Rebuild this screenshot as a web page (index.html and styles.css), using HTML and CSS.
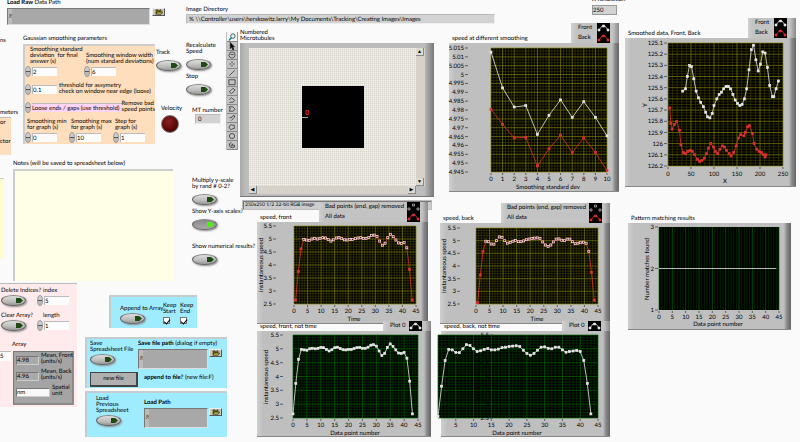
FILE: index.html
```html
<!DOCTYPE html>
<html lang="en">
<head>
<meta charset="UTF-8">
<meta name="viewport" content="width=device-width, initial-scale=1.0">
<title>Speed Tracking</title>
<link rel="stylesheet" href="styles.css">
</head>
<body>
<svg width="0" height="0" class="defs">
    <symbol id="folder" viewBox="0 0 13 8">
        <path d="M3 1h3l1 1h3v4H3z" fill="#6a6000" stroke="#222" stroke-width=".5"/>
        <path d="M3 7l2-3h7l-2 3z" fill="#c8bc30" stroke="#222" stroke-width=".9"/>
        <path d="M8 1q2-1 3 1" fill="none" stroke="#222" stroke-width=".7"/>
    </symbol>
</svg>

<header class="top">
    <div class="load-raw">
        <label for="rawPath"><b>Load Raw</b> Data Path</label>
        <div class="path-row">
            <span class="path"><i>&#8528;</i><input type="text" id="rawPath"></span>
            <button class="browse" aria-label="Browse"><svg><use href="#folder"/></svg></button>
        </div>
    </div>
    <div class="image-dir">
        <label for="imgDir">Image Directory</label>
        <input type="text" id="imgDir" class="readout" value="% \\Controller\users\herskowitz.larry\My Documents\Tracking\Creating Images\Images" readonly>
    </div>
    <div class="resolution">
        <label for="xres">X Resolution</label>
        <input type="text" id="xres" class="readout boxed" value="250" readonly>
    </div>
</header>

<main>
<section class="left">
    <div class="upper">
        <div class="edge">
            <span class="edge-a">ns</span>
            <span class="edge-b">meters</span>
            <div class="edge-orange"><span>or</span><span>ctor</span></div>
            <div class="edge-yellow"></div>
        </div>
        <div class="rows">
            <div class="row-a">
                <div class="gauss">
                    <h2>Gaussian smoothing parameters</h2>
                    <div class="gauss-box">
                        <div class="line">
                            <div class="field wide">
                                <label for="sd">Smoothing standard<br>deviation&nbsp; for final<br>answer (s)</label>
                                <span class="num"><i></i><input type="text" id="sd" value="2"></span>
                            </div>
                            <div class="field">
                                <label for="win">Smoothing window width<br>(num standard deviations)</label>
                                <span class="num"><i></i><input type="text" id="win" value="6"></span>
                            </div>
                        </div>
                        <div class="line">
                            <span class="num"><i></i><input type="text" id="thr" value="0.1"></span>
                            <label for="thr" class="side">threshold for assymetry<br>check on window near edge (loose)</label>
                        </div>
                        <div class="line">
                            <span class="num ring"><i></i><input type="text" id="bad" value="Loose ends / gaps (use threshold)"></span>
                            <label for="bad">Remove bad<br>speed points</label>
                        </div>
                        <div class="line spread">
                            <div class="field">
                                <label for="smin">Smoothing min<br>for graph (s)</label>
                                <span class="num"><i></i><input type="text" id="smin" value="0"></span>
                            </div>
                            <div class="field">
                                <label for="smax">Smoothing max<br>for graph (s)</label>
                                <span class="num"><i></i><input type="text" id="smax" value="10"></span>
                            </div>
                            <div class="field">
                                <label for="step">Step for<br>graph (s)</label>
                                <span class="num"><i></i><input type="text" id="step" value="1"></span>
                            </div>
                        </div>
                    </div>
                </div>
                <div class="track">
                    <label for="track">Track</label>
                    <button class="bool" id="track"><i></i></button>
                    <span class="velocity">Velocity</span>
                    <span class="led"></span>
                </div>
                <div class="recalc">
                    <label for="recalc">Recalculate<br>Speed</label>
                    <button class="bool" id="recalc"><i></i></button>
                    <label for="stop">Stop</label>
                    <button class="bool" id="stop"><i></i></button>
                    <div class="mt">
                        <label for="mt">MT number</label>
                        <input type="text" id="mt" class="readout" value="0" readonly>
                    </div>
                </div>
                <div class="tools">
                    <button aria-label="Zoom" class="on"><svg viewBox="0 0 11 9"><circle cx="6.500" cy="3.500" r="2.500" fill="#d8ffff" stroke="#222" stroke-width=".8"/><path d="M5 5L2 8.500" stroke="#088" stroke-width="1.500"/></svg></button>
                    <button aria-label="Select"><svg viewBox="0 0 11 9"><path d="M3.500 0.500v7l1.500-1.500 1.500 3 1.200-.6L6.300 5.500h2z" fill="#000"/></svg></button>
                    <button aria-label="Pan"><svg viewBox="0 0 11 9"><path d="M3 3q0-2 1.500-1.500Q5.500 0 6.500 1.500 8.500 1 8.500 3l.5 2q-1 3-3.500 3T2 5zM4 4h3.500"/></svg></button>
                    <button aria-label="Point"><svg viewBox="0 0 11 9"><path d="M5.500 1.500v2M5.500 5.500v2M2.500 4.500h2M6.500 4.500h2"/></svg></button>
                    <button aria-label="Line"><svg viewBox="0 0 11 9"><path d="M2.500 7.500l6-6"/></svg></button>
                    <button aria-label="Rectangle"><svg viewBox="0 0 11 9"><path d="M2 2h7v5.500H2z"/></svg></button>
                    <button aria-label="Rotated rectangle"><svg viewBox="0 0 11 9"><path d="M2.500 5.500l4-4 2.500 2-4 4z"/></svg></button>
                    <button aria-label="Broken line"><svg viewBox="0 0 11 9"><path d="M2.500 4L5 2l3.500 3-2 2H2.500"/></svg></button>
                    <button aria-label="Polygon"><svg viewBox="0 0 11 9"><path d="M2.500 2h4l2.500 3-2.500 2h-4l1-2.500z"/></svg></button>
                    <button aria-label="Freehand line"><svg viewBox="0 0 11 9"><path d="M2.500 4.500Q4 3.500 4.500 4.500q2-4 4-2.500 0 2-1.500 3T4.500 7.500"/></svg></button>
                    <button aria-label="Freehand region"><svg viewBox="0 0 11 9"><path d="M3 3q1.500-2 3-.5 3-1 2 1.500 1 3-1.500 2.500-3 2-3.500-.5Q1.500 5 3 3z"/></svg></button>
                    <button aria-label="Oval"><svg viewBox="0 0 11 9"><ellipse cx="5.500" cy="4.500" rx="3" ry="2.800"/></svg></button>
                    <button aria-label="Annulus"><svg viewBox="0 0 11 9"><path d="M5 1.500Q2 2.500 2.500 5T6 7.500 8.500 5L6 4.500V3M4.500 4v1.500h2"/></svg></button>
                </div>
            </div>
            <div class="row-b">
                <div class="notes">
                    <label for="notes">Notes (will be saved to spreadsheet below)</label>
                    <textarea id="notes"></textarea>
                </div>
                <div class="switches">
                    <label for="mult">Multiply y-scale<br>by rand # 0-2?</label>
                    <button class="bool" id="mult"><i></i></button>
                    <label for="yaxis">Show Y-axis scales?</label>
                    <button class="bool lit" id="yaxis"><i></i></button>
                    <label for="numres" class="apart">Show numerical results?</label>
                    <button class="bool" id="numres"><i></i></button>
                </div>
            </div>
        </div>
    </div>

    <div class="lower">
        <div class="indices">
            <div class="index-grid">
                <div>
                    <label for="del">Delete Indices?</label>
                    <button class="bool" id="del"><i></i></button>
                </div>
                <div class="field">
                    <label for="idx">index</label>
                    <span class="num"><i></i><input type="text" id="idx" value="5"></span>
                </div>
                <div>
                    <label for="clr">Clear Array?</label>
                    <button class="bool" id="clr"><i></i></button>
                </div>
                <div class="field">
                    <label for="len">length</label>
                    <span class="num"><i></i><input type="text" id="len" value="1"></span>
                </div>
            </div>
            <h2>Array</h2>
            <div class="array-row">
                <input type="text" class="array-index" aria-label="Array index" value="5">
                <div class="array">
                    <div><input type="text" id="mf" value="4.98" readonly><label for="mf">Mean, Front<br>(units/s)</label></div>
                    <div><input type="text" id="mb" value="4.96" readonly><label for="mb">Mean, Back<br>(units/s)</label></div>
                    <div><input type="text" id="unit" class="unit" value="nm"><label for="unit">Spatial<br>unit</label></div>
                </div>
            </div>
        </div>
        <div class="files">
            <div class="blue append">
                <div class="append-btn">
                    <label for="app">Append to Array</label>
                    <button class="bool" id="app"><i></i></button>
                </div>
                <label class="check">Keep<br>Start<input type="checkbox" checked></label>
                <label class="check">Keep<br>End<input type="checkbox" checked></label>
            </div>
            <div class="blue save">
                <div class="save-left">
                    <label for="save">Save<br>Spreadsheet File</label>
                    <button class="bool" id="save"><i></i></button>
                    <button class="newfile">new file</button>
                </div>
                <div class="save-right">
                    <label for="savePath"><b>Save file path</b> (dialog if empty)</label>
                    <div class="path-row">
                        <span class="path"><i>&#8528;</i><input type="text" id="savePath"></span>
                        <button class="browse" aria-label="Browse"><svg><use href="#folder"/></svg></button>
                    </div>
                    <p><b>append to file?</b> (new file:F)</p>
                </div>
            </div>
            <div class="blue load">
                <div class="load-left">
                    <label for="prev">Load<br>Previous<br>Spreadsheet</label>
                    <button class="bool" id="prev"><i></i></button>
                </div>
                <div class="load-right">
                    <label for="loadPath"><b>Load Path</b></label>
                    <div class="path-row">
                        <span class="path"><i>&#8528;</i><input type="text" id="loadPath"></span>
                        <button class="browse" aria-label="Browse"><svg><use href="#folder"/></svg></button>
                    </div>
                </div>
            </div>
        </div>
    </div>
    <p class="cut">adsheet string</p>
</section>

<section class="graphs">
    <div class="col col-a">
        <h2>Numbered<br>Microtubules</h2>
        <div class="viewer">
            <div class="canvas">
                <svg class="frame" viewBox="0 0 62 62">
                    <rect width="62" height="62"/>
                    <text x="3" y="29" class="mark">0</text>
                    <path d="M0 31.500h6" stroke="#aaa"/>
                </svg>
            </div>
            <div class="vbar"><button>&#9650;</button><button>&#9660;</button></div>
            <div class="hbar"><button>&#9664;</button><button>&#9654;</button></div>
        </div>
        <div class="status"><span>250x250 1/2 32-bit RGB image</span></div>
        <figure class="chart front" data-chart="front"></figure>
        <figure class="chart front-pts" data-chart="frontPts"></figure>
    </div>
    <div class="col col-b">
        <figure class="chart smooth" data-chart="smooth"></figure>
        <figure class="chart back" data-chart="back"></figure>
        <figure class="chart back-pts" data-chart="backPts"></figure>
    </div>
    <div class="col col-c">
        <figure class="chart xy" data-chart="xy"></figure>
        <figure class="chart pattern" data-chart="pattern"></figure>
    </div>
</section>
</main>
<script src="charts.js"></script>
</body>
</html>
```

FILE: styles.css
```css
* {
    box-sizing: border-box;
}
body {
    margin: 0;
    height: 100vh;
    overflow: hidden;
    background: #fafafa;
    font: 6px/6px Lato, "Liberation Sans", sans-serif;
    text-rendering: geometricPrecision;
    color: #000;
}
h2, p, figure {
    margin: 0;
    font-size: 6px;
    font-weight: normal;
}
label, figcaption, h2, p, .velocity {
    display: block;
    white-space: nowrap;
}
input, textarea, button {
    font: inherit;
    color: inherit;
    text-rendering: inherit;
    margin: 0;
    padding: 0;
    border: 0;
    border-radius: 0;
    min-width: 0;
}
.defs {
    position: absolute;
}

/* header */
.top {
    display: grid;
    grid-template-columns: 186px 406fr 208fr;
}
.load-raw {
    padding: 0 0 2px 7px;
}
.load-raw label {
    height: 8px;
}
.load-raw .path {
    width: 143px;
    height: 17px;
}
.path-row {
    display: flex;
    align-items: flex-start;
    gap: 2px;
}
.path {
    display: flex;
    align-items: center;
    background: #aaa;
    border: 1px solid #777;
    border-right-color: #ddd;
    border-bottom-color: #ddd;
}
.path i {
    width: 4px;
    height: 100%;
    display: flex;
    align-items: center;
    background: #bbb;
    overflow: hidden;
}
.path input {
    flex: 1;
    height: 100%;
    background: #a8a8a8;
}
.browse {
    width: 13px;
    height: 8px;
    background: #c8c8b8;
    border: 1px solid #eee;
    border-right-color: #555;
    border-bottom-color: #555;
}
.browse svg {
    display: block;
    width: 11px;
    height: 6px;
}
.image-dir {
    padding-top: 7px;
}
.image-dir label {
    height: 7px;
}
.readout {
    display: block;
    background: #d2d2d2;
    border: 1px solid #bbb;
    border-right-color: #eee;
    border-bottom-color: #eee;
    height: 10px;
    padding-left: 2px;
}
.image-dir .readout {
    width: 76%;
}
.resolution {
    margin-top: -3px;
}
.resolution label {
    height: 8px;
}
.boxed {
    width: 25px;
    border-color: #999;
    padding-left: 0;
}

main {
    display: flex;
}
.left {
    width: 240px;
    flex: none;
}
.graphs {
    flex: 1;
    display: grid;
    grid-template-columns: 198fr 186fr 176fr;
}

/* controls */
.bool {
    display: block;
    width: 25px;
    height: 11px;
    border: 1px solid #666;
    border-top-color: #888;
    border-radius: 50%;
    background: linear-gradient(#ddd, #bcbcbc 60%, #999);
    box-shadow: 1px 1px 2px #888;
}
.bool i {
    display: block;
    width: 7px;
    height: 5px;
    margin-left: 14px;
    background: #1d4a10;
    clip-path: polygon(0 0, 60% 0, 100% 50%, 60% 100%, 0 100%);
}
.bool.lit {
    background: linear-gradient(#888, #aaa);
}
.bool.lit i {
    background: #4cf010;
}
.num {
    display: flex;
    align-items: center;
    width: 32px;
    height: 11px;
    gap: 1px;
}
.num i {
    flex: none;
    width: 6px;
    height: 11px;
    border-radius: 50%;
    border: 1px solid #999;
    background: linear-gradient(#ccc 45%, #555 45%, #555 55%, #bbb 55%);
}
.num input {
    flex: 1;
    width: 0;
    height: 9px;
    background: #fcfcfc;
    border-top: 1px solid #bbb;
    border-left: 1px solid #bbb;
}
.num.ring {
    width: 97px;
}
.ring input {
    background: #ffd5f5;
    border-left: 0;
}

/* left side */
.upper {
    display: flex;
}
.edge {
    width: 13px;
    display: flex;
    flex-direction: column;
    align-items: flex-start;
    white-space: nowrap;
}
.edge-a {
    margin-top: 11px;
}
.edge-b {
    margin-top: 66px;
}
.edge-orange {
    width: 11px;
    height: 38px;
    margin-top: 1px;
    padding-top: 2px;
    border-top: 1px solid #bbb;
    background: #ffdebd;
    display: flex;
    flex-direction: column;
    gap: 13px;
}
.edge-yellow {
    width: 4px;
    height: 81px;
    margin-top: 23px;
    border-top: 1px solid #ccc;
    background: #fffdd0;
}
.row-a {
    display: flex;
    height: 123px;
}
.gauss {
    width: 132px;
    margin: 9px 0 0 10px;
}
.gauss h2 {
    height: 8px;
}
.gauss-box {
    display: flex;
    flex-direction: column;
    gap: 6px;
    height: 100px;
    padding-top: 1px;
    border-top: 2px solid #ccc;
    border-left: 2px solid #ccc;
    background: #ffdebd;
}
.line {
    display: flex;
    align-items: flex-end;
}
.line.spread {
    gap: 12px;
}
.field {
    width: 32px;
}
.field.wide {
    width: 59px;
}
.field label {
    margin: 0 0 1px 2px;
}
.line .side {
    margin-left: 2px;
}
.wide label {
    margin-left: 5px;
}
.track {
    width: 30px;
    padding-top: 23px;
    margin-left: 1px;
}
.track .bool,
.recalc .bool {
    margin-top: 4px;
}
.velocity {
    margin: 35px 0 3px 5px;
}
.led {
    display: block;
    width: 18px;
    height: 18px;
    margin-left: 5px;
    border-radius: 50%;
    border: 1px solid #777;
    background: radial-gradient(circle at 40% 35%, #8a2020, #5a0808 60%, #300);
}
.recalc {
    width: 40px;
    padding-top: 16px;
}
.recalc .bool + label {
    margin-top: 4px;
}
.mt {
    margin: 13px 0 0 6px;
}
.mt .readout {
    width: 26px;
    margin-left: 3px;
}
.tools {
    display: flex;
    flex-direction: column;
    width: 12px;
    margin-top: 5px;
    border-left: 1px solid #bbb;
}
.tools button {
    height: 9px;
    width: 11px;
    background: #c4c4c4;
    border-bottom: 1px solid #888;
    border-right: 1px solid #999;
}
.tools .on {
    height: 10px;
    background: #f4f4f4;
}
.tools svg {
    display: block;
    width: 10px;
    height: 8px;
    fill: none;
    stroke: #222;
    stroke-width: .8;
}
.row-b {
    display: flex;
}
.notes {
    width: 160px;
    margin-top: 11px;
}
.notes label {
    height: 8px;
}
.notes textarea {
    display: block;
    width: 100%;
    height: 112px;
    resize: none;
    background: #fffee6;
    border-top: 2px solid #ccc;
    border-left: 2px solid #ccc;
}
.switches {
    padding: 28px 0 0 19px;
}
.switches .bool {
    margin: 4px 0;
}
.switches .apart {
    margin-top: 14px;
}
.lower {
    display: flex;
    gap: 8px;
    margin-top: 2px;
}
.indices {
    width: 77px;
    height: 124px;
    background: #ffebeb;
    border-top: 1px solid #bbb;
}
.index-grid {
    display: grid;
    grid-template-columns: 36px 32px;
    row-gap: 7px;
    padding: 4px 0 0 1px;
}
.index-grid .bool {
    margin-top: 1px;
}
.index-grid .field label {
    margin-left: 6px;
}
.indices h2 {
    margin: 11px 0 3px 12px;
}
.array-row {
    display: flex;
    align-items: flex-start;
    gap: 2px;
}
.array-index {
    width: 11px;
    height: 10px;
    background: #fcfcfc;
    border-top: 1px solid #bbb;
}
.array {
    width: 61px;
    height: 54px;
    padding: 1px 0 0 2px;
    display: grid;
    gap: 4px;
    align-content: start;
    background: #a4a4a4;
    border: 1px solid #777;
    border-right: 2px solid #8a8a8a;
    border-bottom: 2px solid #8a8a8a;
}
.array div {
    display: flex;
    align-items: flex-end;
    gap: 2px;
}
.array input {
    width: 23px;
    height: 9px;
    background: #aaa;
    border: 1px solid #777;
    border-right-color: #ccc;
    border-bottom-color: #ccc;
}
.array .unit {
    width: 34px;
    background: #f8f8f8;
}
.files {
    padding-top: 12px;
}
.blue {
    display: flex;
    width: 142px;
    background: #a0ecff;
    border-top: 2px solid #c4cccf;
    border-left: 2px solid #c4cccf;
}
.append {
    width: 88px;
    height: 33px;
    margin-left: 24px;
    padding: 6px 0 0 9px;
}
.append-btn {
    width: 43px;
    padding-top: 3px;
}
.append-btn .bool,
.save .bool,
.load .bool {
    margin-top: 1px;
}
.check {
    width: 18px;
}
.check input {
    display: block;
    appearance: none;
    width: 7px;
    height: 7px;
    margin-top: 2px;
    background: #fff;
    border: 1px solid #777;
}
.check input:checked::after {
    content: "";
    display: block;
    width: 3px;
    height: 5px;
    margin-left: 1px;
    border: solid #000;
    border-width: 0 1px 1px 0;
    transform: rotate(40deg);
}
.save {
    height: 51px;
    margin-top: 9px;
    padding: 2px 0 0 3px;
}
.save-left {
    width: 48px;
}
.newfile {
    width: 48px;
    height: 15px;
    margin-top: 7px;
    background: #b0b0b0;
    border: 1px solid #444;
    border-right-width: 2px;
    border-bottom-width: 2px;
}
.save .path,
.load .path {
    width: 70px;
    height: 20px;
}
.save .path-row,
.load .path-row {
    gap: 1px;
    margin-top: 2px;
}
.save p {
    margin: 6px 0 0 6px;
}
.load {
    height: 46px;
    margin-top: 3px;
    padding: 3px 0 0 9px;
}
.load-left {
    width: 48px;
}
.load-right {
    padding-top: 4px;
}
.load .path {
    width: 64px;
}
.cut {
    margin-top: 29px;
}

/* image viewer */
.col-a {
    padding: 3px 4px 0 0;
}
.col-a h2 {
    height: 13px;
}
.viewer {
    display: grid;
    grid-template: 138px 8px / 1fr 9px;
    padding: 5px 9px 3px;
    background: linear-gradient(90deg, #a8a8a8, #bcbcbc 6px, #bcbcbc 95%, #777);
    border-bottom: 1px solid #777;
    height: 154px;
}
.canvas {
    display: grid;
    place-items: center;
    background: repeating-linear-gradient(90deg, rgba(255, 255, 255, .4) 0 1px, transparent 1px 2px),
        repeating-linear-gradient(#e8e6e0 0 1px, #d8d5cd 1px 2px);
}
.frame {
    display: block;
    width: 62px;
    height: 62px;
}
.mark {
    fill: #f02020;
    font-weight: bold;
    font-size: 7px;
}
.vbar, .hbar {
    display: flex;
    justify-content: space-between;
    background: #d6d2ca;
}
.vbar {
    flex-direction: column;
}
.vbar button, .hbar button {
    width: 8px;
    height: 8px;
    font-size: 5px;
    background: #dedad2;
    border-right: 1px solid #888;
    border-bottom: 1px solid #888;
}
.status {
    height: 10px;
    margin: 3px 2px 0;
    padding: 1px;
    background: #bbb;
    font-size: 5px;
}
.status span {
    display: block;
    height: 8px;
    padding: 0 1px;
    background: #ccc;
    border-left: 1px solid #777;
    border-top: 1px solid #777;
}

/* charts */
figcaption {
    height: 7px;
    padding-left: 3px;
}
.panel {
    position: relative;
    background: linear-gradient(90deg, #cfcfcf, #bfbfbf 6px, #bfbfbf calc(100% - 7px), #888 calc(100% - 4px), #666);
    border-bottom: 1px solid #888;
}
.panel > svg {
    display: block;
    width: 100%;
    height: auto;
    overflow: visible;
}
.panel text {
    font-size: 6px;
    fill: #000;
}
.legend {
    position: absolute;
    right: 0;
    bottom: 100%;
    display: grid;
    width: 48px;
    padding: 0 9px 0 7px;
    background: linear-gradient(90deg, #d0d0d0, #c3c3c3 5px, #c3c3c3 calc(100% - 6px), #888);
}
.legend div {
    display: flex;
    justify-content: space-between;
    align-items: center;
    white-space: nowrap;
}
.legend svg {
    display: block;
    flex: none;
    width: 13px;
    height: 10px;
    background: #000;
}
.front {
    margin: 5px 6px 0 17px;
}
.front-pts {
    margin: 0 3px 0 17px;
}
.smooth {
    margin: 9px 5px 0 11px;
}
.back {
    margin: 24px 14px 0 2px;
}
.back-pts {
    margin: 0 14px 0 3px;
}
.xy {
    margin: 4px 4px 0 1px;
}
.pattern {
    margin: 29px 9px 0 4px;
}
.front .legend, .back .legend {
    width: 109px;
    padding: 0 8px 0 6px;
}
```

FILE: charts.js
```javascript
const front = [2.65, 3.75, 4.62, 4.98, 4.96, 4.95, 5, 5.02, 5, 5.02, 5.05, 5.04, 4.98, 4.92, 4.97, 5.04, 5.06, 5.01, 4.97, 4.96, 4.98, 4.98, 5.01, 5.04, 5.05, 5.02, 5.02, 5.06, 5.13, 5.15, 5.1, 4.92, 4.76, 4.84, 5.05, 5.18, 5.09, 4.96, 4.85, 4.83, 4.87, 4.66, 3.83, 2.65];
const back = [2.55, 3.65, 4.58, 4.98, 4.96, 4.87, 4.86, 5, 5.15, 5.12, 5, 4.9, 4.93, 4.98, 5.01, 4.96, 4.96, 4.99, 5.04, 5.06, 5.08, 5.1, 5.11, 5.08, 4.95, 4.83, 4.77, 4.83, 4.95, 5.06, 5.07, 5.02, 5, 5.06, 5.06, 4.96, 4.88, 4.9, 4.92, 4.94, 4.9, 4.58, 3.75, 2.65];
const frontXY = [[32, 125.53], [38, 125.51], [42, 125.4], [47, 125.3], [51, 125.31], [56, 125.42], [61, 125.53], [66, 125.59], [71, 125.63], [77, 125.67], [82, 125.72], [86, 125.76], [91, 125.77], [96, 125.73], [100, 125.66], [106, 125.6], [111, 125.56], [116, 125.54], [121, 125.51], [126, 125.49], [131, 125.49], [136, 125.51], [141, 125.56], [146, 125.61], [151, 125.64], [156, 125.66], [161, 125.65], [166, 125.6], [171, 125.51], [176, 125.34], [181, 125.16], [186, 125.12], [191, 125.25], [196, 125.35], [201, 125.29], [206, 125.18], [211, 125.19], [216, 125.32], [221, 125.48], [227, 125.58], [230, 125.58], [235, 125.51], [240, 125.44]];
const backXY = [[4, 125.68], [6, 125.82], [9, 125.87], [14, 125.83], [19, 125.8], [25, 125.88], [28, 126.01], [33, 126.08], [38, 126.09], [43, 126.07], [48, 126.06], [53, 126.07], [58, 126.1], [64, 126.14], [69, 126.16], [74, 126.15], [79, 126.13], [84, 126.09], [88, 126.04], [93, 126], [99, 126.03], [103, 126.07], [108, 126.09], [113, 126.05], [118, 126.02], [123, 126.03], [127, 126.06], [133, 126.09], [137, 126.11], [143, 126.08], [148, 126.02], [153, 125.95], [158, 125.92], [165, 125.93], [168, 125.9], [173, 125.85], [177, 125.84], [184, 125.91], [187, 126], [193, 126.05], [198, 126.07], [203, 126.08], [208, 126.1], [211, 126.12], [213, 126.1]];

const white = '#e8e8e8', red = '#e03030';
const olive = ['#383800', '#828200'], green = ['#003000', '#006a00'];
const byTime = a => a.map((v, i) => [i + 0.6, v]);
const byIndex = a => a.map((v, i) => [i, v]);

// plot: [x, y, width, height]; x and y axes: [start, end, step]
const charts = {
    smooth: {
        title: 'speed at different smoothing', size: [170, 148], plot: [42, 5, 116, 124],
        x: [0, 10, 1], y: [5.015, 4.945, -0.005], minor: [4, 3], grid: olive,
        labelX: 15, xBase: 138, xTitle: ['Smoothing standard dev', 99, 146],
        series: [
            ['Front', white, byIndex([5.0127, 4.9925, 4.9817, 4.9825, 4.9662, 4.977, 4.9857, 4.9758, 4.9847, 4.9758, 4.9654])],
            ['Back', red, byIndex([4.9804, 4.9719, 4.9643, 4.9645, 4.9484, 4.9581, 4.9658, 4.956, 4.9643, 4.956, 4.9458])]
        ]
    },
    xy: {
        title: 'Smoothed data, Front, Back', size: [171, 148], plot: [43, 5, 115, 123],
        x: [0, 250, 50], y: [125.1, 126.2, 0.1], minor: [5, 4], grid: olive,
        labelX: 38, xBase: 138, xTitle: ['X', 100, 145], yTitle: ['Y', 22, 67],
        series: [['Front', white, frontXY], ['Back', red, backXY]]
    },
    front: {
        title: 'speed, front', size: [171, 101], plot: [37, 4, 122, 78],
        x: [0, 45, 5], y: [5.5, 2.5, -0.5], minor: [5, 5], grid: olive,
        labelX: 15, xBase: 91, xTitle: ['Time', 97, 99], yTitle: ['instantaneous speed', 6, 43],
        series: [['Bad points (end, gap) removed', white, byTime(front).slice(3, 42), true], ['All data', red, byTime(front)]]
    },
    back: {
        title: 'speed, back', size: [170, 100], plot: [36, 5, 122, 76],
        x: [0, 45, 5], y: [5.5, 2.5, -0.5], minor: [5, 5], grid: olive,
        labelX: 16, xBase: 90, xTitle: ['Time', 97, 98], yTitle: ['instantaneous speed', 6, 43],
        series: [['Bad points (end, gap) removed', white, byTime(back).slice(3, 42), true], ['All data', red, byTime(back)]]
    },
    frontPts: {
        title: 'speed, front, not time', size: [174, 105], plot: [36, 4, 125, 83],
        x: [0, 45, 5], y: [5.5, 2.5, -0.5], minor: [5, 5], grid: green,
        labelX: 22, xBase: 96, xTitle: ['Data point number', 98, 104], yTitle: ['instantaneous speed', 11, 46],
        series: [['Plot 0', white, byIndex(front)]]
    },
    backPts: {
        title: 'speed, back, not time', size: [169, 105], plot: [-3, 4, 160, 83],
        x: [0, 45, 5], y: [5.5, 2.5, -0.5], minor: [5, 5], grid: green, skipZero: true,
        labelX: 48, xBase: 96, xTitle: ['Data point number', 76, 104], yTitle: ['instantaneous speed', 39, 46],
        series: [['Plot 0', white, byIndex(back)]]
    },
    pattern: {
        title: 'Pattern matching results', size: [163, 106], plot: [31, 4, 120, 83],
        x: [0, 45, 5], y: [3, 1, -1], minor: [5, 0], grid: green, noLegend: true, noMarkers: true,
        labelX: 26, xBase: 96, xTitle: ['Data point number', 90, 103], yTitle: ['Number matches found', 21, 46],
        series: [['Plot 0', white, [[0, 2], [44, 2]]]]
    }
};

function draw(c) {
    const [px, py, pw, ph] = c.plot;
    const [x0, x1, xs] = c.x, [y0, y1, ys] = c.y;
    const X = v => (px + (v - x0) / (x1 - x0) * pw).toFixed(1);
    const Y = v => (py + (v - y0) / (y1 - y0) * ph).toFixed(1);
    const nx = Math.round((x1 - x0) / xs), ny = Math.round((y1 - y0) / ys);
    let grid = '', major = '', ticks = '', labels = '';

    for (let i = 0; i <= nx * c.minor[0]; i++) {
        const line = `M${X(x0 + i * xs / c.minor[0])} ${py}v${ph}`;
        if (i % c.minor[0]) grid += line; else major += line;
    }
    for (let i = 0; i <= ny * c.minor[1]; i++) {
        if (!c.minor[1]) break;
        const line = `M${px} ${Y(y0 + i * ys / c.minor[1])}h${pw}`;
        if (i % c.minor[1]) grid += line; else major += line;
    }
    for (let i = c.skipZero ? 1 : 0; i <= nx; i++) {
        const v = x0 + i * xs;
        ticks += `M${X(v)} ${py + ph + 1}v2`;
        labels += `<text x="${X(v)}" y="${c.xBase}" text-anchor="middle">${v}</text>`;
    }
    for (let i = 0; i <= ny; i++) {
        const v = y0 + i * ys;
        ticks += `M${c.labelX + 1} ${Y(v)}h3`;
        labels += `<text x="${c.labelX}" y="${+Y(v) + 2}" text-anchor="end">${+v.toFixed(3)}</text>`;
    }
    labels += `<text x="${c.xTitle[1]}" y="${c.xTitle[2]}" text-anchor="middle">${c.xTitle[0]}</text>`;
    if (c.yTitle) {
        const [t, tx, ty] = c.yTitle;
        labels += `<text transform="translate(${tx} ${ty}) rotate(-90)" text-anchor="middle">${t}</text>`;
    }

    let lines = '';
    [...c.series].reverse().forEach(([name, color, pts, dotsOnly]) => {
        if (!dotsOnly) {
            lines += `<polyline points="${pts.map(p => X(p[0]) + ',' + Y(p[1])).join(' ')}" fill="none" stroke="${color}" stroke-width=".8"/>`;
        }
        if (c.noMarkers) return;
        const fill = dotsOnly ? '#500' : color;
        pts.forEach(p => {
            lines += `<rect x="${X(p[0]) - 1}" y="${Y(p[1]) - 1}" width="2" height="2" fill="${fill}" stroke="${color}" stroke-width=".7"/>`;
        });
    });

    return `<svg viewBox="0 0 ${c.size[0]} ${c.size[1]}">
        <rect x="${px}" y="${py}" width="${pw}" height="${ph}" fill="#000"/>
        <path d="${grid}" stroke="${c.grid[0]}" stroke-width=".7"/>
        <path d="${major}" stroke="${c.grid[1]}" stroke-width=".7"/>
        <path d="${ticks}" stroke="#333" stroke-width=".7"/>${labels}${lines}</svg>`;
}

function legend(c) {
    if (c.noLegend) return '';
    return '<div class="legend">' + c.series.map(([name, color, pts, dotsOnly]) =>
        `<div>${name}<svg viewBox="0 0 13 10">
            ${dotsOnly ? '' : `<path d="M2 7l3-4h3l3 4" fill="none" stroke="${color}" stroke-width=".8"/>`}
            <path d="M1 6h2v2H1zM5.500 2h2v2h-2zM10 6h2v2h-2z" fill="${dotsOnly ? 'none' : color}" stroke="${color}" stroke-width=".6"/>
        </svg></div>`).join('') + '</div>';
}

document.querySelectorAll('[data-chart]').forEach(el => {
    const c = charts[el.dataset.chart];
    el.innerHTML = `<figcaption>${c.title}</figcaption><div class="panel">${legend(c)}${draw(c)}</div>`;
});
```
